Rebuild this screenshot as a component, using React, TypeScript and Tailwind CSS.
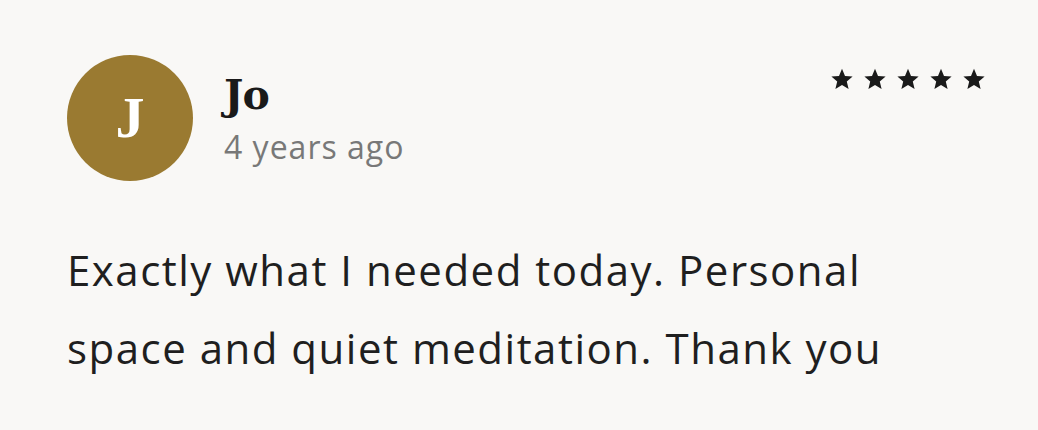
const Star = () => (
  <svg viewBox="0 0 24 24" className="h-[24px] w-[24px] fill-[#1a1a1a]" aria-hidden>
    <path d="M12 1.8l3 7.1 7.6.6-5.8 5 1.8 7.4L12 17.9l-6.6 4 1.8-7.4-5.8-5 7.6-.6z" />
  </svg>
);

export default function App() {
  return (
    <div className="h-[430px] w-[1038px] bg-[#f9f8f6] pl-[67px] pr-[52px] pt-[55px] font-['Open_Sans','Lato',sans-serif] text-[#1f1f1f]">
      <div className="flex items-start">
        <div className="flex h-[126px] w-[126px] shrink-0 items-center justify-center rounded-full bg-[#9a7a31]">
          <span className="font-['Liberation_Serif',serif] text-[58px] font-bold leading-none text-white">J</span>
        </div>
        <div className="ml-[31px] flex flex-col pt-[14px]">
          <span className="font-['DejaVu_Serif',serif] text-[41px] font-bold leading-[52px] tracking-[-1px] text-[#1a1a1a]">Jo</span>
          <span className="mt-[3px] text-[32px] leading-[46px] tracking-[1px] text-[#787878]">4 years ago</span>
        </div>
        <div className="ml-auto mt-[12px] flex gap-[9px]">
          <Star />
          <Star />
          <Star />
          <Star />
          <Star />
        </div>
      </div>
      <p className="mt-[50px] text-[42px] leading-[78px] tracking-[1.5px] text-[#1f1f1f]">
        Exactly what I needed today. Personal
        <br />
        space and quiet meditation. Thank you
      </p>
    </div>
  );
}
